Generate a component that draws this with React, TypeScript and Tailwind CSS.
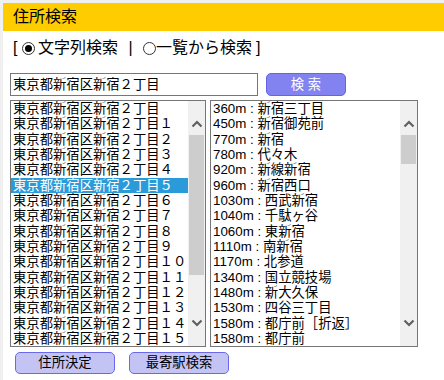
import React from "react";

const addresses = [
  "東京都新宿区新宿２丁目",
  "東京都新宿区新宿２丁目１",
  "東京都新宿区新宿２丁目２",
  "東京都新宿区新宿２丁目３",
  "東京都新宿区新宿２丁目４",
  "東京都新宿区新宿２丁目５",
  "東京都新宿区新宿２丁目６",
  "東京都新宿区新宿２丁目７",
  "東京都新宿区新宿２丁目８",
  "東京都新宿区新宿２丁目９",
  "東京都新宿区新宿２丁目１０",
  "東京都新宿区新宿２丁目１１",
  "東京都新宿区新宿２丁目１２",
  "東京都新宿区新宿２丁目１３",
  "東京都新宿区新宿２丁目１４",
  "東京都新宿区新宿２丁目１５",
];

const stations = [
  "360m : 新宿三丁目",
  "450m : 新宿御苑前",
  "770m : 新宿",
  "780m : 代々木",
  "920m : 新線新宿",
  "960m : 新宿西口",
  "1030m : 西武新宿",
  "1040m : 千駄ヶ谷",
  "1060m : 東新宿",
  "1110m : 南新宿",
  "1170m : 北参道",
  "1340m : 国立競技場",
  "1480m : 新大久保",
  "1530m : 四谷三丁目",
  "1580m : 都庁前［折返］",
  "1580m : 都庁前",
];

function Chevron({ down }: { down?: boolean }) {
  return (
    <svg width="12" height="8" viewBox="0 0 12 8">
      <polyline
        points={down ? "1.5,1.5 6,6 10.5,1.5" : "1.5,6.5 6,2 10.5,6.5"}
        fill="none"
        stroke="#606060"
        strokeWidth="2.2"
      />
    </svg>
  );
}

function Scrollbar({ thumb }: { thumb: number }) {
  return (
    <div className="flex h-full w-[17px] shrink-0 flex-col bg-[#f0f0f0]">
      <div className="flex h-[34px] items-end justify-center pb-[7px]">
        <Chevron />
      </div>
      <div className="flex-1 px-[1px]">
        <div className="w-full bg-[#cdcdcd]" style={{ height: thumb }} />
      </div>
      <div className="flex h-[34px] items-start justify-center pt-[7px]">
        <Chevron down />
      </div>
    </div>
  );
}

function ListBox({
  items,
  selected,
  width,
  thumb,
}: {
  items: string[];
  selected?: number;
  width: string;
  thumb: number;
}) {
  return (
    <div className={`flex h-[247px] border border-[#767676] bg-white ${width}`}>
      <div className="flex-1 overflow-hidden">
        {items.map((item, i) => (
          <div
            key={item + i}
            className={`h-[15.35px] whitespace-nowrap pl-[2px] text-[13.33px] leading-[15.35px] ${
              i === selected ? "bg-[#2a9bd8] text-white" : "text-black"
            }`}
          >
            {item}
          </div>
        ))}
      </div>
      <Scrollbar thumb={thumb} />
    </div>
  );
}

function Radio({ checked }: { checked?: boolean }) {
  return (
    <span className="flex h-[13px] w-[13px] shrink-0 items-center justify-center rounded-full border border-[#333333] bg-white">
      {checked && <span className="h-[7px] w-[7px] rounded-full bg-black" />}
    </span>
  );
}

export default function App() {
  return (
    <div
      className="h-[380px] w-[444px] overflow-hidden bg-[#f0f0f0] pl-[3px] pt-[3px] text-black"
      style={{ fontFamily: '"Liberation Sans", "Noto Sans CJK JP", sans-serif' }}
    >
      <div className="h-full w-full bg-white">
        {/* Header */}
        <div className="flex h-[28px] items-center bg-[#ffcc00] pl-[10px] text-[16px]">
          住所検索
        </div>

        {/* Mode */}
        <div className="mt-[5px] flex h-[24px] items-center pl-[10px] text-[16px]">
          <span className="w-[9px]">[</span>
          <Radio checked />
          <span className="ml-[3px]">文字列検索</span>
          <span className="w-[25px] text-center">|</span>
          <Radio />
          <span>一覧から検索</span>
          <span className="ml-[4px]">]</span>
        </div>

        {/* Search */}
        <div className="mt-[13px] flex items-center pl-[7px]">
          <div className="flex h-[23px] w-[248px] items-center border border-[#767676] pl-[2px] text-[13.33px]">
            東京都新宿区新宿２丁目
          </div>
          <button className="ml-[8px] h-[23px] w-[80px] rounded-[5px] border border-[#6464e6] bg-[#8282f0] text-[13.33px] text-white">
            検 索
          </button>
        </div>

        {/* Lists */}
        <div className="mt-[4px] flex gap-[4px] pl-[7px]">
          <ListBox items={addresses} selected={5} width="w-[196px]" thumb={140} />
          <ListBox items={stations} width="w-[208px]" thumb={29} />
        </div>

        {/* Actions */}
        <div className="mt-[5px] flex gap-[14px] pl-[12px]">
          <button className="h-[22px] w-[100px] rounded-[5px] border border-[#6a6ae8] bg-[#c4c4f4] text-[13.33px]">
            住所決定
          </button>
          <button className="h-[22px] w-[100px] rounded-[5px] border border-[#6a6ae8] bg-[#c4c4f4] text-[13.33px]">
            最寄駅検索
          </button>
        </div>
      </div>
    </div>
  );
}
